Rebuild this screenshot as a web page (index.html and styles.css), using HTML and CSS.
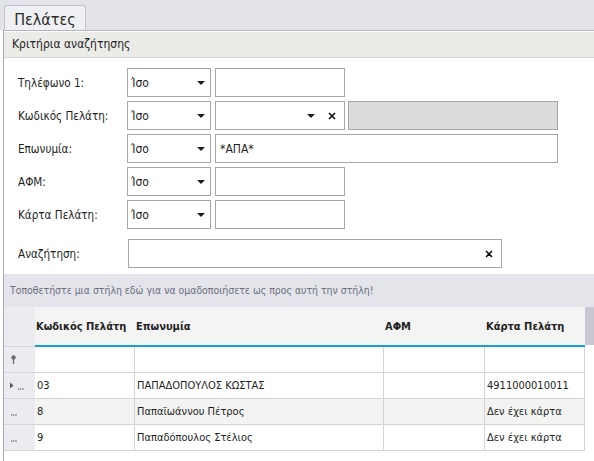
FILE: index.html
```html
<!DOCTYPE html>
<html lang="el">
<head>
<meta charset="utf-8">
<title>Πελάτες</title>
<link rel="stylesheet" href="styles.css">
</head>
<body>
<div class="topbar">
  <div class="tab">Πελάτες</div>
</div>
<div class="panel">
  <div class="group-header">Κριτήρια αναζήτησης</div>
  <div class="form">
    <div class="row">
      <div class="label">Τηλέφωνο 1:</div>
      <div class="box select"><span>Ίσο</span><i class="arrow"></i></div>
      <div class="box input w130"></div>
    </div>
    <div class="row">
      <div class="label">Κωδικός Πελάτη:</div>
      <div class="box select"><span>Ίσο</span><i class="arrow"></i></div>
      <div class="box input w130 combo"><i class="arrow"></i><svg class="xicon" width="8" height="8" viewBox="0 0 8 8"><path d="M1 1L7 7M7 1L1 7" stroke="#111" stroke-width="1.6"/></svg></div>
      <div class="box disabled"></div>
    </div>
    <div class="row">
      <div class="label">Επωνυμία:</div>
      <div class="box select"><span>Ίσο</span><i class="arrow"></i></div>
      <div class="box input wide">*ΑΠΑ*</div>
    </div>
    <div class="row">
      <div class="label">ΑΦΜ:</div>
      <div class="box select"><span>Ίσο</span><i class="arrow"></i></div>
      <div class="box input w130"></div>
    </div>
    <div class="row">
      <div class="label">Κάρτα Πελάτη:</div>
      <div class="box select"><span>Ίσο</span><i class="arrow"></i></div>
      <div class="box input w130"></div>
    </div>
    <div class="row search-row">
      <div class="label label-search">Αναζήτηση:</div>
      <div class="box search"><svg class="xicon" width="8" height="8" viewBox="0 0 8 8"><path d="M1 1L7 7M7 1L1 7" stroke="#111" stroke-width="1.6"/></svg></div>
    </div>
  </div>
  <div class="group-panel">Τοποθετήστε μια στήλη εδώ για να ομαδοποιήσετε ως προς αυτή την στήλη!</div>
  <div class="grid">
    <div class="grow head">
      <div class="ind ind-head"></div>
      <div class="hcell">Κωδικός Πελάτη</div>
      <div class="hcell">Επωνυμία</div>
      <div class="hcell">ΑΦΜ</div>
      <div class="hcell">Κάρτα Πελάτη</div>
      <div class="scroll-head"></div>
    </div>
    <div class="grow filter">
      <div class="ind"><svg width="7" height="10" viewBox="0 0 7 10"><circle cx="3.5" cy="2.5" r="2.2" fill="#6a6a6a"/><path d="M3.5 4V9" stroke="#6a6a6a" stroke-width="1.2"/></svg></div>
      <div class="cell"></div>
      <div class="cell"></div>
      <div class="cell"></div>
      <div class="cell"></div>
      <div class="tail"></div>
    </div>
    <div class="grow data">
      <div class="ind"><svg width="20" height="10" viewBox="0 0 20 10"><path d="M0 1.5L3.5 4.5L0 7.5Z" fill="#555"/><path d="M8 8h1.2M10.2 8h1.2M12.4 8h1.2" stroke="#333" stroke-width="1.2"/></svg></div>
      <div class="cell">03</div>
      <div class="cell">ΠΑΠΑΔΟΠΟΥΛΟΣ ΚΩΣΤΑΣ</div>
      <div class="cell"></div>
      <div class="cell">4911000010011</div>
      <div class="tail"></div>
    </div>
    <div class="grow data alt">
      <div class="ind"><svg width="20" height="10" viewBox="0 0 20 10"><path d="M1 8h1.2M3.2 8h1.2M5.4 8h1.2" stroke="#333" stroke-width="1.2"/></svg></div>
      <div class="cell">8</div>
      <div class="cell">Παπαϊωάννου Πέτρος</div>
      <div class="cell"></div>
      <div class="cell">Δεν έχει κάρτα</div>
      <div class="tail"></div>
    </div>
    <div class="grow data">
      <div class="ind"><svg width="20" height="10" viewBox="0 0 20 10"><path d="M1 8h1.2M3.2 8h1.2M5.4 8h1.2" stroke="#333" stroke-width="1.2"/></svg></div>
      <div class="cell">9</div>
      <div class="cell">Παπαδόπουλος Στέλιος</div>
      <div class="cell"></div>
      <div class="cell">Δεν έχει κάρτα</div>
      <div class="tail"></div>
    </div>
    <div class="grid-rest"></div>
  </div>
</div>
</body>
</html>
```
FILE: styles.css
```css
html, body {
  margin: 0;
  padding: 0;
  background: #ffffff;
  height: 100%;
  overflow: hidden;
}
body {
  font-family: "DejaVu Sans Condensed", "DejaVu Sans", sans-serif;
  color: #1e1e1e;
  font-size: 12px;
}
.topbar {
  height: 30px;
  background: #e3e4ea;
  padding-left: 4px;
  display: flex;
  align-items: flex-end;
}
.tab {
  box-sizing: border-box;
  width: 82px;
  height: 25px;
  border: 1px solid #c2c3cc;
  border-bottom: none;
  border-radius: 3px 3px 0 0;
  background: #eff0f3;
  font-size: 16px;
  color: #2a2a2a;
  display: flex;
  align-items: center;
  justify-content: center;
  padding-top: 2px;
}
.panel {
  margin-left: 3px;
  border-left: 1px solid #a9aab3;
  border-top: 1px solid #b3b4bd;
  height: calc(100% - 31px);
  display: flex;
  flex-direction: column;
}
.group-header {
  height: 25px;
  line-height: 25px;
  border-top: 1px solid #ffffff;
  border-bottom: 1px solid #d6d6d6;
  background: #ebebe8;
  padding-left: 8px;
  font-size: 12px;
  color: #1e1e1e;
}
.form {
  padding: 10px 0 6px 14px;
  background: #ffffff;
}
.row {
  display: flex;
  height: 29px;
  margin-bottom: 4px;
}
.search-row {
  margin-top: 10px;
  margin-bottom: 0;
}
.label {
  width: 109px;
  display: flex;
  align-items: center;
  font-size: 11.6px;
}
.label-search {
  width: 110px;
}
.box {
  box-sizing: border-box;
  height: 29px;
  border: 1px solid #a6a6a6;
  background: #ffffff;
  display: flex;
  align-items: center;
  padding: 0 3px;
  font-size: 12px;
}
.select {
  width: 84px;
  padding-right: 5px;
}
.select span {
  flex: 1;
}
.arrow {
  display: block;
  width: 0;
  height: 0;
  border-left: 4px solid transparent;
  border-right: 4px solid transparent;
  border-top: 4px solid #1e1e1e;
}
.input {
  margin-left: 4px;
}
.w130 {
  width: 130px;
}
.wide {
  width: 343px;
  padding-left: 4px;
  font-size: 12px;
}
.combo {
  justify-content: flex-end;
  padding-right: 8px;
}
.combo .xicon {
  margin-left: 13px;
}
.disabled {
  width: 210px;
  margin-left: 3px;
  background: #dcdcdc;
}
.search {
  width: 374px;
  justify-content: flex-end;
  padding-right: 8px;
}
.group-panel {
  height: 33px;
  line-height: 33px;
  background: #e4e5ea;
  color: #6b6e80;
  font-size: 10.4px;
  padding-left: 6px;
  white-space: nowrap;
  overflow: hidden;
}
.grid {
  flex: 1;
  display: flex;
  flex-direction: column;
  background: #ffffff;
}
.grow {
  display: grid;
  grid-template-columns: 31px 100px 249px 101px 100px 1fr;
}
.head {
  height: 40px;
}
.ind-head {
  background: #c7c8d2;
}
.hcell {
  background: #f4f4f4;
  border-bottom: 2px solid #199ddb;
  font-weight: bold;
  font-size: 11px;
  color: #222;
  display: flex;
  align-items: center;
  padding-left: 1px;
  padding-top: 1px;
  white-space: nowrap;
  overflow: hidden;
}
.scroll-head {
  background: #c7c8d2;
  height: 38px;
}
.ind {
  background: #ececf0;
  border-bottom: 1px solid #d6d6de;
  display: flex;
  align-items: center;
  padding-left: 6px;
}
.filter, .data {
  height: 26px;
}
.cell {
  box-sizing: border-box;
  border-right: 1px solid #d3d3dc;
  border-bottom: 1px solid #d3d3dc;
  display: flex;
  align-items: center;
  padding-left: 2px;
  font-size: 11px;
  color: #1e1e1e;
  white-space: nowrap;
  overflow: hidden;
}
.alt .cell {
  background: #f3f3f2;
}
.tail {
  background: #ffffff;
}
.grid-rest {
  flex: 1;
}
```
